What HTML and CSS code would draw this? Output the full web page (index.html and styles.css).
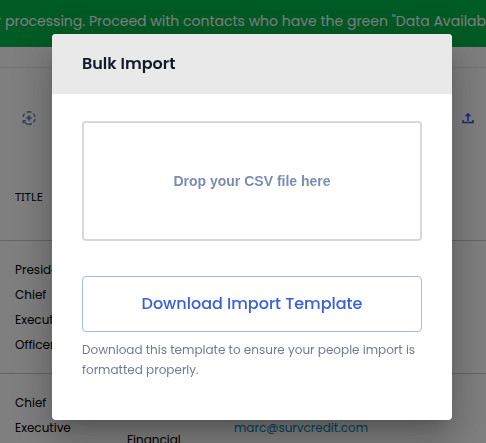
FILE: index.html
```html
<!DOCTYPE html>
<html lang="en">
<head>
<meta charset="utf-8">
<title>Bulk Import</title>
<link rel="stylesheet" href="styles.css">
</head>
<body>
<div class="page">
  <div class="banner"><p class="banner-text">r processing. Proceed with contacts who have the green "Data Available"</p></div>
  <div class="topbar"></div>
  <div class="toolbar">
    <button class="icon-button" type="button" aria-label="Refresh data">
      <svg width="16" height="16" viewBox="0 0 16 16" fill="none" stroke="#6f83b5" stroke-width="1.5"><path d="M2 7A6.200 6.200 0 0 1 3.600 3.800M5.500 2.300A6.200 6.200 0 0 1 10.500 2.300M12.400 3.700A6.200 6.200 0 0 1 14 7M14 9A6.200 6.200 0 0 1 12.400 12.300M11 13.500A6.200 6.200 0 0 1 3.500 12.300"/><path d="M1.500 10H5.500L1.500 14Z" fill="#6f83b5" stroke="none"/><path d="M8 5L9 7L11 8L9 9L8 11L7 9L5 8L7 7Z" fill="#6f83b5" stroke-width=".5"/></svg>
    </button>
    <button class="icon-button" type="button" aria-label="Import contacts">
      <svg width="12" height="12" viewBox="0 0 12 12" fill="none" stroke="#2f55e0" stroke-width="1.500"><path d="M6 9V3M1 8V10.500H11V8"/><path d="M6 .8L9.200 4.200H2.800Z" fill="#2f55e0" stroke="none"/></svg>
    </button>
  </div>
  <table class="people">
    <colgroup><col class="col-title"><col class="col-company"><col></colgroup>
    <thead><tr><th>TITLE</th><th></th><th></th></tr></thead>
    <tbody>
      <tr><td>President<br>Chief<br>Executive<br>Officer</td><td></td><td></td></tr>
      <tr><td>Chief<br>Executive<br>Officer</td><td><br>Financial</td><td><a href="mailto:marc@survcredit.com">marc@survcredit.com</a></td></tr>
    </tbody>
  </table>
</div>
<div class="overlay">
  <section class="modal" role="dialog" aria-modal="true" aria-labelledby="modal-title">
    <header class="modal-header"><h1 class="modal-title" id="modal-title">Bulk Import</h1></header>
    <div class="modal-body">
      <button class="dropzone" type="button">Drop your CSV file here</button>
      <button class="download" type="button">Download Import Template</button>
      <p class="hint">Download this template to ensure your people import is formatted properly.</p>
    </div>
  </section>
</div>
</body>
</html>
```
FILE: styles.css
```css
* { box-sizing: border-box; }
body {
  margin: 0;
  height: 100vh;
  overflow: hidden;
  background: #fff;
  color: #000;
  font-family: Poppins, Inter, sans-serif;
  font-size: 12px;
}
button { font-family: inherit; cursor: pointer; }
h1, p { margin: 0; }
.page { height: 100%; overflow: hidden; }
.banner {
  height: 47px;
  padding-top: 10px;
  overflow: hidden;
  background: #00b648;
  color: #fff;
}
.banner-text {
  margin-left: -4px;
  font-size: 14px;
  line-height: 22px;
  white-space: nowrap;
}
.topbar { height: 21px; border-bottom: 1px solid #e8e8e8; }
.toolbar {
  display: flex;
  justify-content: space-between;
  align-items: center;
  height: 100px;
  padding: 0 12px 0 21px;
}
.icon-button {
  display: flex;
  padding: 0;
  border: 0;
  background: none;
}
.people {
  width: 100%;
  table-layout: fixed;
  border-collapse: collapse;
}
.col-title { width: 112px; }
.col-company { width: 107px; }
.people th, .people td {
  padding: 16px 0 16px 15px;
  line-height: 25px;
  text-align: left;
  border-bottom: 1px solid #ccc;
}
.people th {
  height: 72px;
  font-family: "Noto Sans", sans-serif;
  font-size: 11px;
  font-weight: 400;
  vertical-align: top;
}
.people a { color: #008abf; text-decoration: none; }
.overlay {
  position: fixed;
  inset: 0;
  display: flex;
  align-items: flex-start;
  padding: 34px 34px 0 52px;
  background: rgba(0, 0, 0, .5);
}
.modal {
  flex: 1;
  overflow: hidden;
  border-radius: 4px;
  background: #fff;
  box-shadow: 0 11px 15px -7px rgba(0, 0, 0, .2), 0 24px 38px 3px rgba(0, 0, 0, .14), 0 9px 46px 8px rgba(0, 0, 0, .12);
}
.modal-header { padding: 18px 30px; background: #e9e9e9; }
.modal-title {
  color: #15192c;
  font-size: 16px;
  line-height: 24px;
  font-weight: 600;
}
.modal-body { padding: 27px 30px 40px; }
.dropzone, .download {
  display: block;
  width: 100%;
  border-radius: 4px;
  background: #fff;
}
.dropzone {
  height: 120px;
  margin-bottom: 35px;
  border: 2px solid #d8d8d8;
  color: #7c8db5;
  font: 700 14px "Liberation Sans", sans-serif;
}
.download {
  height: 56px;
  margin-bottom: 8px;
  padding-bottom: 3px;
  border: 1px solid #a5b5ef;
  color: #3860da;
  font-size: 16px;
  font-weight: 500;
}
.hint { color: #717a91; line-height: 20px; }
```
